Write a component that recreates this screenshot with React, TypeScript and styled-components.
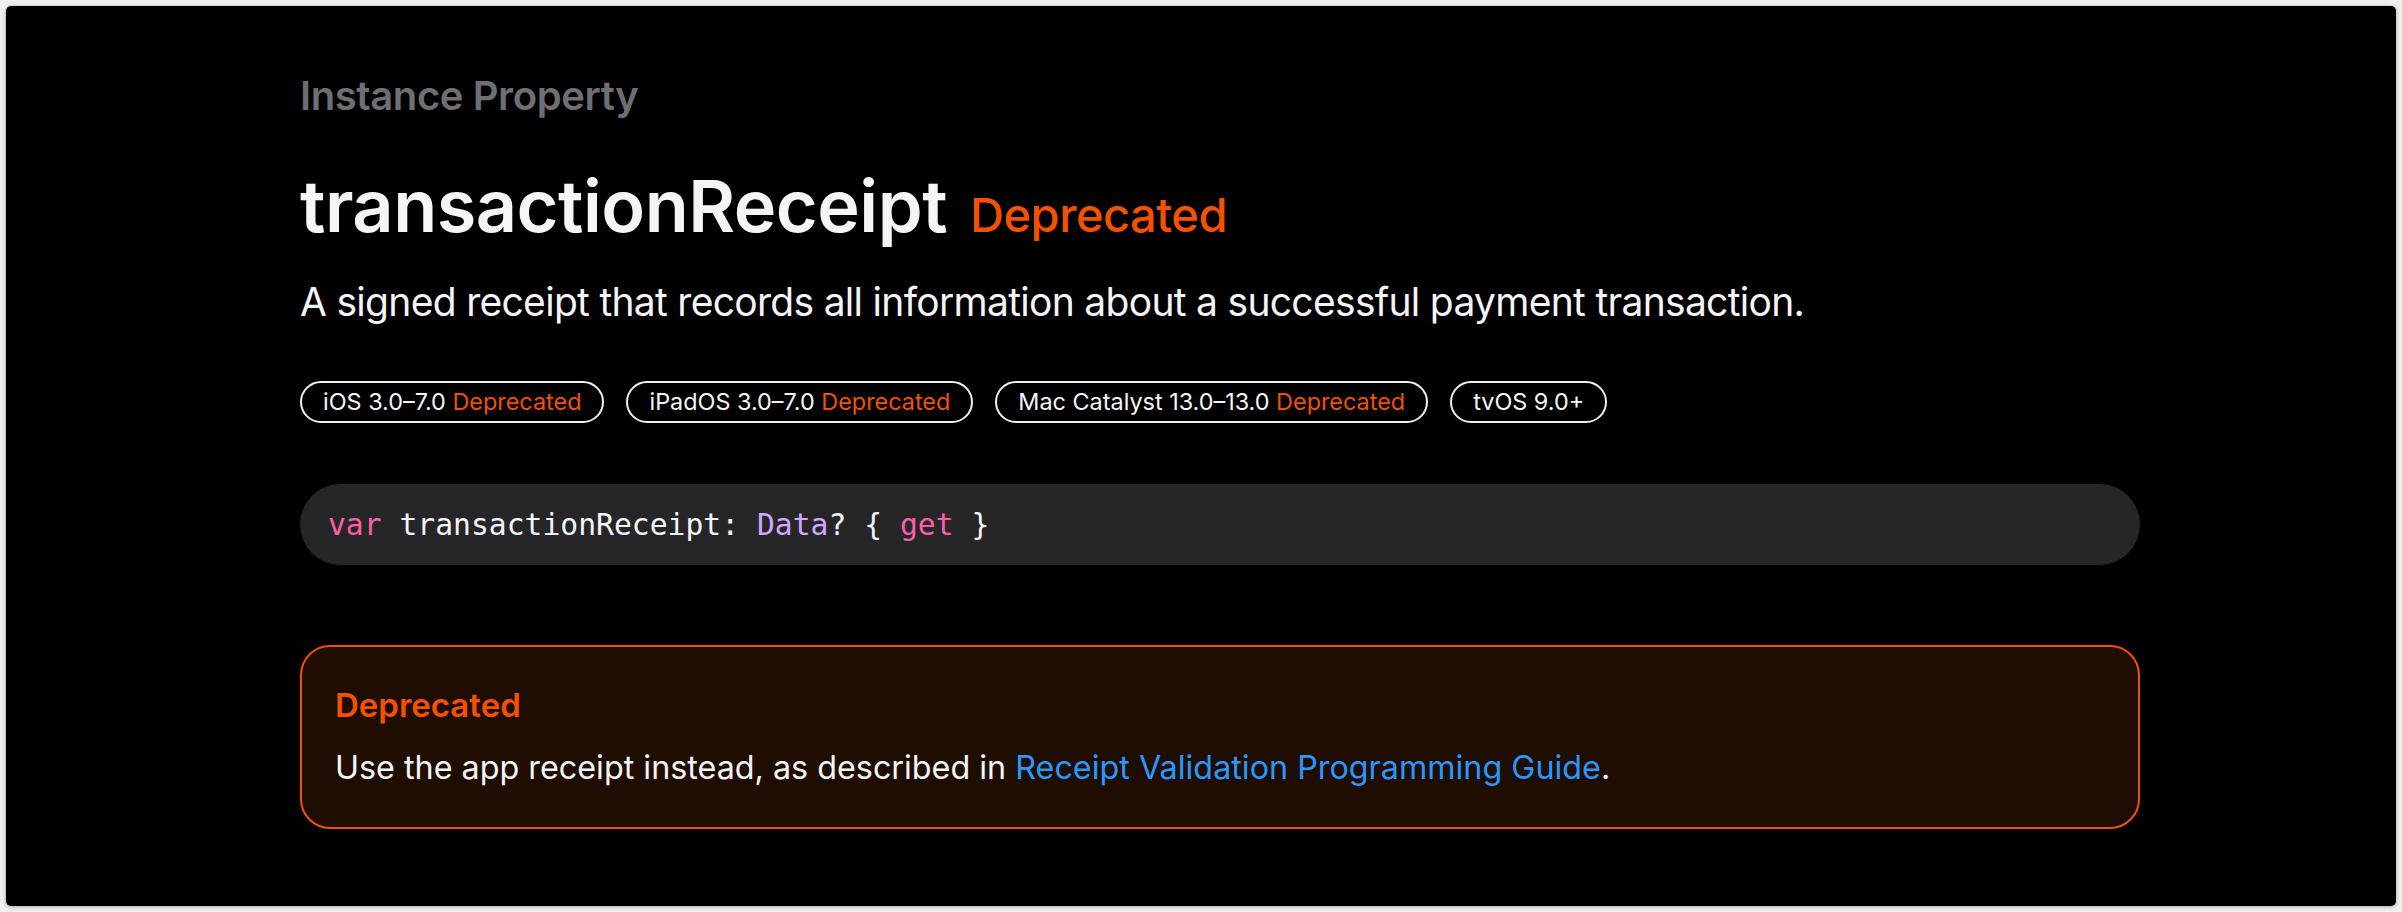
import React from 'react';
import styled, {createGlobalStyle} from "styled-components";

const GlobalStyle = createGlobalStyle`
    html, body {
        margin: 0;
        padding: 0;
        background: #efefef;
    }
    body {
        font-family: Inter, "Noto Sans", sans-serif;
        -webkit-font-smoothing: antialiased;
    }
`;

type Platform = {
    name: string
    deprecated?: boolean
}

const platforms: Platform[] = [
    {name: "iOS 3.0–7.0", deprecated: true},
    {name: "iPadOS 3.0–7.0", deprecated: true},
    {name: "Mac Catalyst 13.0–13.0", deprecated: true},
    {name: "tvOS 9.0+"},
];

export default function App() {
    return (
        <>
            <GlobalStyle/>
            <Page>
                <Card>
                    <Content>
                        <Eyebrow>Instance Property</Eyebrow>
                        <TitleRow>
                            <Title>transactionReceipt</Title>
                            <TitleBadge>Deprecated</TitleBadge>
                        </TitleRow>
                        <Abstract>A signed receipt that records all information about a successful payment transaction.</Abstract>

                        <Chips>
                            {platforms.map((p) => (
                                <Chip key={p.name}>
                                    {p.name}
                                    {p.deprecated && <ChipDeprecated> Deprecated</ChipDeprecated>}
                                </Chip>
                            ))}
                        </Chips>

                        <CodeBlock>
                            <Keyword>var</Keyword> transactionReceipt: <TypeName>Data</TypeName>? {"{"} <Keyword>get</Keyword> {"}"}
                        </CodeBlock>

                        <Callout>
                            <CalloutLabel>Deprecated</CalloutLabel>
                            <CalloutText>
                                Use the app receipt instead, as described in <Link href="#">Receipt Validation Programming Guide</Link>.
                            </CalloutText>
                        </Callout>
                    </Content>
                </Card>
            </Page>
        </>
    );
}

const Page = styled.div`
    padding: 6px;
`;

const Card = styled.div`
    height: 900px;
    background: #000;
    border-radius: 5px;
    box-shadow: 0 0 0 1px rgba(0, 0, 0, 0.05), 0 1px 4px rgba(0, 0, 0, 0.25);
    padding: 66px 0 0 294px;
    box-sizing: border-box;
`;

const Content = styled.div`
    width: 1840px;
    display: flex;
    flex-direction: column;
    align-items: flex-start;
`;

const Eyebrow = styled.div`
    font-size: 40px;
    line-height: 48px;
    font-weight: 600;
    color: #6e6e73;
    letter-spacing: -0.4px;
`;

const TitleRow = styled.div`
    display: flex;
    align-items: baseline;
    gap: 23px;
    margin-top: 46px;
    height: 80px;
`;

const Title = styled.h1`
    margin: 0;
    font-size: 72px;
    line-height: 80px;
    font-weight: 600;
    color: #f5f5f7;
    letter-spacing: -0.5px;
`;

const TitleBadge = styled.span`
    font-size: 47px;
    line-height: 56px;
    font-weight: 500;
    color: #f25200;
    letter-spacing: -0.5px;
`;

const Abstract = styled.p`
    margin: 32px 0 0;
    font-size: 39px;
    line-height: 48px;
    font-weight: 400;
    color: #f5f5f7;
    letter-spacing: -0.7px;
`;

const Chips = styled.div`
    display: flex;
    gap: 22px;
    margin-top: 55px;
`;

const Chip = styled.div`
    height: 42px;
    box-sizing: border-box;
    border: 2px solid #f0f0f2;
    border-radius: 21px;
    padding: 0 21px;
    font-size: 23.4px;
    line-height: 38px;
    color: #f5f5f7;
    white-space: pre;
`;

const ChipDeprecated = styled.span`
    color: #f25200;
`;

const CodeBlock = styled.div`
    margin-top: 61px;
    width: 100%;
    height: 81px;
    box-sizing: border-box;
    border-radius: 41px;
    background: #262628;
    padding: 0 28px;
    font-family: "DejaVu Sans Mono", "Liberation Mono", monospace;
    font-size: 29.7px;
    line-height: 81px;
    color: #f5f5f7;
    white-space: pre;
`;

const Keyword = styled.span`
    color: #fc5fa3;
`;

const TypeName = styled.span`
    color: #d0a8ff;
`;

const Callout = styled.div`
    margin-top: 80px;
    width: 100%;
    box-sizing: border-box;
    height: 184px;
    border: 2px solid #f25200;
    border-radius: 30px;
    background: #200d01;
    padding: 38px 33px 0;
    display: flex;
    flex-direction: column;
    gap: 21px;
`;

const CalloutLabel = styled.div`
    font-size: 33px;
    line-height: 40px;
    font-weight: 600;
    color: #f25200;
`;

const CalloutText = styled.p`
    margin: 0;
    font-size: 32.3px;
    line-height: 44px;
    color: #f5f5f7;
`;

const Link = styled.a`
    color: #2997ff;
    text-decoration: none;
`;
